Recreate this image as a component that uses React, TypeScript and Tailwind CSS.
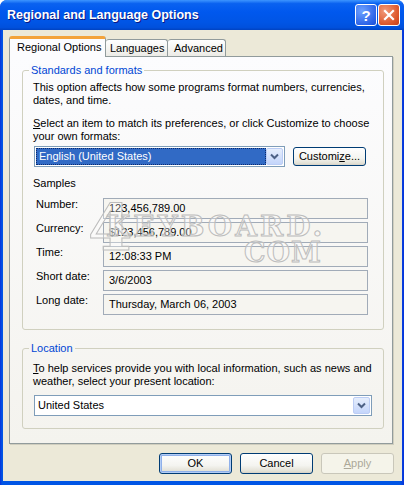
import React from "react";

const Chevron: React.FC = () => (
  <svg width="9" height="7" viewBox="0 0 9 7">
    <path d="M1 1.5l3.5 3.5L8 1.5" stroke="#4d6185" strokeWidth="2" fill="none" />
  </svg>
);

const ArrowButton: React.FC = () => (
  <div className="flex h-full w-[17px] items-center justify-center rounded-[2px] border border-[#bccdf5] bg-[linear-gradient(to_bottom,#e6eefc,#c4d5fb)]">
    <Chevron />
  </div>
);

const XpButton: React.FC<{
  children: React.ReactNode;
  isDefault?: boolean;
  disabled?: boolean;
  className?: string;
}> = ({ children, isDefault, disabled, className = "h-[21px]" }) => (
  <button
    className={`w-[73px] rounded-[3px] border text-[11px] leading-[13px] ${className} ${
      disabled
        ? "border-[#c9c7ba] bg-[#f5f4ea] text-[#aca899]"
        : "border-[#003c74] bg-[linear-gradient(to_bottom,#ffffff,#f4f4f0_60%,#e3e1d6_90%,#d6d0c5)] text-black"
    } ${isDefault ? "shadow-[inset_0_0_0_1px_#b4cdf5,inset_0_0_0_2px_#8fb0ea]" : ""}`}
  >
    {children}
  </button>
);

const samples = [
  { label: "Number:", value: "123,456,789.00" },
  { label: "Currency:", value: "$123,456,789.00" },
  { label: "Time:", value: "12:08:33 PM" },
  { label: "Short date:", value: "3/6/2003" },
  { label: "Long date:", value: "Thursday, March 06, 2003" },
];

const App: React.FC = () => {
  return (
    <div className="relative flex h-[485px] w-[404px] flex-col rounded-t-[7px] bg-[linear-gradient(to_right,#0831d9,#0055e5_2px,#0055e5_99%,#0831d9)] font-['Liberation_Sans',Arial,sans-serif] text-[11px] leading-[13px] text-black">
      {/* title bar */}
      <div className="flex h-[30px] shrink-0 items-center rounded-t-[7px] bg-[linear-gradient(to_bottom,#3d95ff_0%,#0a62f0_12%,#0058ee_40%,#0055e5_75%,#0050dc_92%,#0042c0_100%)] pl-[7px] pr-[4px]">
        <span className="flex-1 text-[12.5px] font-bold text-white [text-shadow:1px_1px_0_#0a1883]">
          Regional and Language Options
        </span>
        <div className="flex gap-[1px]">
          <div className="flex h-[22px] w-[22px] items-center justify-center rounded-[3px] border border-white bg-[radial-gradient(circle_at_30%_30%,#6ea2ff,#2d64e8_70%,#1a4fd6)] text-[15px] font-bold text-white">
            ?
          </div>
          <div className="flex h-[22px] w-[22px] items-center justify-center rounded-[3px] border border-white bg-[radial-gradient(circle_at_30%_30%,#f19a7a,#de5a2e_65%,#c8401a)]">
            <svg width="12" height="12" viewBox="0 0 12 12">
              <path d="M2 2l8 8M10 2l-8 8" stroke="white" strokeWidth="2.2" strokeLinecap="square" />
            </svg>
          </div>
        </div>
      </div>

      {/* body */}
      <div className="mb-[4px] ml-[3px] mr-[2px] flex-1 bg-[#ece9d8] pl-[6px] pt-[6px]">
        {/* tabs */}
        <div className="flex h-[20px] items-end">
          <div className="relative z-10 -mb-px flex h-[21px] w-[97px] items-center rounded-t-[3px] border-x border-t-[3px] border-x-[#919b9c] border-t-[#f3a33a] bg-[#fcfcfe] pb-[1px] pl-[7px]">
            Regional Options
          </div>
          <div className="flex h-[17px] w-[62px] items-center rounded-t-[3px] border-r border-t border-[#919b9c] bg-[linear-gradient(to_bottom,#ffffff,#ecebe6)] pl-[4px]">
            Languages
          </div>
          <div className="flex h-[17px] w-[58px] items-center rounded-t-[3px] border-r border-t border-[#919b9c] bg-[linear-gradient(to_bottom,#ffffff,#ecebe6)] pl-[6px]">
            Advanced
          </div>
        </div>

        {/* panel */}
        <div className="w-[384px] border border-[#919b9c] bg-[linear-gradient(to_bottom,#fcfcfe,#f4f3ee)] pb-[14px] pl-[12px] pt-[13px] shadow-[1px_1px_0_#d0cebf]">
          {/* standards and formats */}
          <div className="relative w-[362px] rounded-[3px] border border-[#d0d0bf] pb-[14px] pl-[10px] pt-[10px]">
            <span className="absolute -top-[7px] left-[6px] bg-[#fbfbfc] px-[2px] text-[#0046d5]">
              Standards and formats
            </span>
            <p>
              This option affects how some programs format numbers, currencies,
              <br />
              dates, and time.
            </p>
            <p className="mt-[10px]">
              <u>S</u>elect an item to match its preferences, or click Customize to choose
              <br />
              your own formats:
            </p>
            <div className="mt-[3px] flex items-center">
              <div className="ml-px flex h-[21px] w-[251px] border border-[#7f9db9] bg-white p-px">
                <div className="flex flex-1 items-center border border-dotted border-[#0b2a6e] bg-[#316ac5] pl-[2px] text-white">
                  English (United States)
                </div>
                <ArrowButton />
              </div>
              <div className="ml-[8px]">
                <XpButton className="h-[19px]">
                  Customi<u>z</u>e...
                </XpButton>
              </div>
            </div>
            <p className="mt-[10px]">Samples</p>
            <div className="mt-[8px] flex flex-col gap-[3px]">
              {samples.map((s) => (
                <div key={s.label} className="flex items-start">
                  <span className="w-[70px] pl-[3px]">{s.label}</span>
                  <div className="flex h-[21px] w-[265px] items-center border border-[#a1abb8] bg-[#f6f5f0] pl-[5px]">
                    {s.value}
                  </div>
                </div>
              ))}
            </div>
          </div>

          {/* location */}
          <div className="relative mt-[18px] w-[362px] rounded-[3px] border border-[#d0d0bf] pb-[12px] pl-[10px] pt-[13px]">
            <span className="absolute -top-[7px] left-[6px] bg-[#f6f5f1] px-[2px] text-[#0046d5]">
              Location
            </span>
            <p>
              <u>T</u>o help services provide you with local information, such as news and
              <br />
              weather, select your present location:
            </p>
            <div className="ml-px mt-[7px] flex h-[21px] w-[338px] border border-[#7f9db9] bg-white p-px">
              <div className="flex flex-1 items-center pl-[2px]">United States</div>
              <ArrowButton />
            </div>
          </div>
        </div>

        {/* dialog buttons */}
        <div className="mt-[9px] flex justify-end gap-[8px] pr-[8px]">
          <XpButton isDefault>OK</XpButton>
          <XpButton>Cancel</XpButton>
          <XpButton disabled>
            <u>A</u>pply
          </XpButton>
        </div>
      </div>

      {/* watermark */}
      <div className="pointer-events-none absolute left-0 top-0 font-['DejaVu_Serif',serif] font-bold text-[rgba(255,255,255,0.3)] [-webkit-text-stroke:1px_#bcbcbc]">
        <span className="absolute left-[88px] top-[196px] text-[64px] leading-[64px]">4</span>
        <span className="absolute left-[106px] top-[212px] text-[28px] leading-[30px] tracking-[3px]">
          KEYBOARD.
        </span>
        <span className="absolute left-[244px] top-[238px] text-[27px] leading-[30px] tracking-[1px]">
          COM
        </span>
      </div>
    </div>
  );
};

export default App;
